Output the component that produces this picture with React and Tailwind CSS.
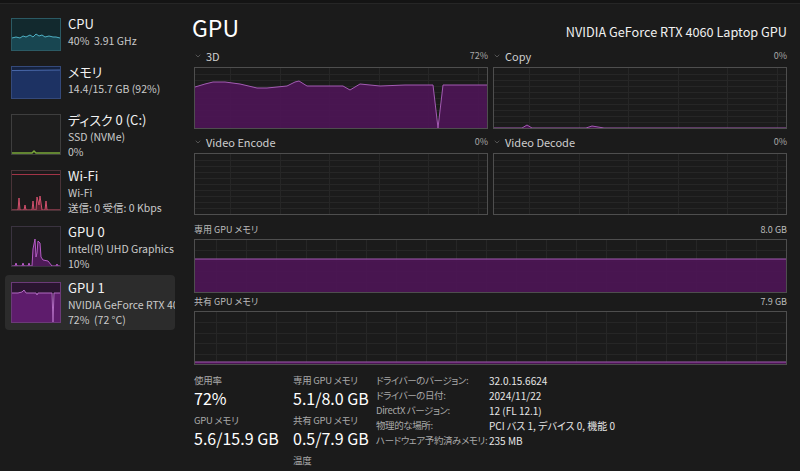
import { ChevronDown } from 'lucide-react';

// Sidebar entries: thumbnail kind + text lines
const DEVICES = [
  { kind: 'cpu', title: 'CPU', lines: ['40%  3.91 GHz'] },
  { kind: 'mem', title: 'メモリ', lines: ['14.4/15.7 GB (92%)'] },
  { kind: 'disk', title: 'ディスク 0 (C:)', lines: ['SSD (NVMe)', '0%'] },
  { kind: 'wifi', title: 'Wi-Fi', lines: ['Wi-Fi', '送信: 0 受信: 0 Kbps'] },
  { kind: 'gpu0', title: 'GPU 0', lines: ['Intel(R) UHD Graphics', '10%'] },
  { kind: 'gpu1', title: 'GPU 1', lines: ['NVIDIA GeForce RTX 4060 Laptop GPU', '72%  (72 °C)'], active: true },
];

function Thumb({ kind, tall }) {
  const w = 48;
  const h = tall ? 39 : 31;
  if (kind === 'cpu') {
    const line = '0,19 4,18 8,19 11,17 14,18 18,16 21,18 24,15 27,17 30,16 33,18 37,17 41,18 44,18 48,19';
    return (
      <svg width={w + 2} height={h + 2} className="block shrink-0 border border-[#2b5a64] bg-[#12292e]">
        <polygon points={`${line} 48,31 0,31`} fill="#184651" />
        <polyline points={line} fill="none" stroke="#4fb0c4" strokeWidth="1" />
      </svg>
    );
  }
  if (kind === 'mem') {
    return (
      <svg width={w + 2} height={h + 2} className="block shrink-0 border border-[#34497a] bg-[#16233f]">
        <rect x="0" y="3" width={w} height={h - 3} fill="#1d3263" />
        <line x1="0" x2={w} y1="3.5" y2="3" stroke="#4a69ab" />
      </svg>
    );
  }
  if (kind === 'disk') {
    return (
      <svg width={w + 2} height={h + 2} className="block shrink-0 border border-[#3e3e3e] bg-[#1d1d1d]">
        <polyline points="0,38 20,38 22,36 24,38 48,38" fill="none" stroke="#7aa83a" strokeWidth="1.5" />
      </svg>
    );
  }
  if (kind === 'wifi') {
    const spikes = '0,39 6,39 7,27 8,39 12,39 13,34 14,39 20,39 21,30 22,39 24,39 25,26 27,34 28,25 30,39 33,39 34,30 35,39 44,39 48,39';
    return (
      <svg width={w + 2} height={h + 2} className="block shrink-0 border border-[#4a3338] bg-[#1c1a1b]">
        <line x1="0" x2={w} y1="3.5" y2="3.5" stroke="#a33447" />
        <polygon points={spikes} fill="#5a2030" />
        <polyline points={spikes} fill="none" stroke="#d0506c" strokeWidth="1" />
      </svg>
    );
  }
  if (kind === 'gpu0') {
    const spikes = '0,39 3,39 4,36 5,39 10,39 11,36 12,39 16,39 17,36 18,39 20,39 21,22 23,12 24,30 25,26 26,14 28,16 29,30 31,33 36,34 40,39 44,39 45,37 46,39 48,39';
    return (
      <svg width={w + 2} height={h + 2} className="block shrink-0 border border-[#3a3340] bg-[#1c1b1d]">
        <polygon points={spikes} fill="#4d1a57" />
        <polyline points={spikes} fill="none" stroke="#b45bc4" strokeWidth="1" />
      </svg>
    );
  }
  const line = '0,10 6,10 10,9 12,7 14,10 20,10 24,10 25,12 26,10 36,10 40,10 41,39 42,10 48,10';
  return (
    <svg width={w + 2} height={h + 2} className="block shrink-0 border border-[#6b3a78] bg-[#2a1530]">
      <polygon points={`${line} 48,39 0,39`} fill="#5e1c6c" />
      <polyline points={line} fill="none" stroke="#b06ac0" strokeWidth="1" />
    </svg>
  );
}

function Grid({ w, h, step, offset, rows }) {
  const lines = [];
  for (let x = offset; x < w; x += step) {
    const px = Math.round(x) + 0.5;
    lines.push(<line key={`v${x}`} x1={px} x2={px} y1={0} y2={h} />);
  }
  for (let i = 1; i < rows; i++) {
    const py = Math.round((h * i) / rows) + 0.5;
    lines.push(<line key={`h${i}`} x1={0} x2={w} y1={py} y2={py} />);
  }
  return (
    <g stroke="#262626" strokeWidth="1">
      {lines}
    </g>
  );
}

function Chart({ w, h, step = 49.5, offset = 35, rows = 10, line }) {
  return (
    <div className="border border-[#4e4e4e] bg-[#1b1b1b]">
      <svg width={w} height={h} className="block">
        <Grid w={w} h={h} step={step} offset={offset} rows={rows} />
        {line && (
          <>
            <polygon points={`${line} ${w},${h} 0,${h}`} fill="#4b1553" fillOpacity="0.95" />
            <polyline points={line} fill="none" stroke="#a35bb3" strokeWidth="1" />
          </>
        )}
      </svg>
    </div>
  );
}

function EngineLabel({ name, value }) {
  return (
    <div className="flex h-[18px] items-start justify-between leading-[14px]">
      <span className="flex items-center gap-[4px] text-[11px] text-[#cfcfcf]">
        <ChevronDown size={8} strokeWidth={1.5} className="text-[#8a8a8a]" />
        {name}
      </span>
      <span className="text-[9px] text-[#a8a8a8]">{value}</span>
    </div>
  );
}

function Stat({ label, value }) {
  return (
    <div className="pb-[3px]">
      <div className="text-[9.5px] leading-[14px] tracking-[-0.3px] text-[#a8a8a8]">{label}</div>
      {value && <div className="text-[16px] leading-[23px]">{value}</div>}
    </div>
  );
}

const LINE_3D =
  '0,19 10,16 18,14 30,14 45,16 62,20 72,20 92,18 100,14 104,13 112,18 130,18 148,18 155,22 165,16 185,18 210,17 238,17 243,60 248,17 292,17';
const LINE_COPY = '0,60 28,60 33,57 38,60 92,60 98,58 110,60 292,60';

const DRIVER = [
  ['ドライバーのバージョン:', '32.0.15.6624'],
  ['ドライバーの日付:', '2024/11/22'],
  ['DirectX バージョン:', '12 (FL 12.1)'],
  ['物理的な場所:', 'PCI バス 1, デバイス 0, 機能 0'],
  ['ハードウェア予約済みメモリ:', '235 MB'],
];

export default function App() {
  return (
    <div className="h-[471px] w-[800px] overflow-hidden bg-[#1b1b1b] font-['Noto_Sans_CJK_JP',sans-serif] text-white [font-feature-settings:'palt']">
      <div className="h-[4px] border-b border-[#262626] bg-[#141414]" />
      <div className="flex">
        {/* device list */}
        <aside className="w-[180px] shrink-0 pt-[7px]">
          {DEVICES.map((d) => {
            const tall = d.lines.length > 1;
            return (
              <div
                key={d.title}
                className={`mx-[5px] mb-[1px] flex items-start gap-[7px] overflow-hidden whitespace-nowrap rounded-[4px] px-[6px] pt-[7px] ${
                  tall ? 'h-[55px]' : 'h-[47px]'
                } ${d.active ? 'bg-[#2c2c2c]' : ''}`}
              >
                <Thumb kind={d.kind} tall={tall} />
                <div className="-mt-[3px] min-w-0">
                  <div className="text-[13px] leading-[18px] text-[#f2f2f2]">{d.title}</div>
                  {d.lines.map((l) => (
                    <div key={l} className="whitespace-pre text-[10.5px] leading-[15px] text-[#cacaca]">
                      {l}
                    </div>
                  ))}
                </div>
              </div>
            );
          })}
        </aside>

        {/* GPU detail */}
        <main className="w-[620px] pl-[14px] pr-[13px] pt-[8px]">
          <div className="flex h-[30px] items-baseline justify-between">
            <h1 className="-ml-[2px] text-[23px] leading-[30px] text-white">GPU</h1>
            <span className="text-[12.7px] text-[#f0f0f0]">NVIDIA GeForce RTX 4060 Laptop GPU</span>
          </div>

          <div className="mt-[7px] grid grid-cols-2 gap-x-[5px]">
            <div>
              <EngineLabel name="3D" value="72%" />
              <Chart w={292} h={60} line={LINE_3D} />
            </div>
            <div>
              <EngineLabel name="Copy" value="0%" />
              <Chart w={292} h={60} line={LINE_COPY} />
            </div>
            <div className="mt-[6px]">
              <EngineLabel name="Video Encode" value="0%" />
              <Chart w={292} h={60} />
            </div>
            <div className="mt-[6px]">
              <EngineLabel name="Video Decode" value="0%" />
              <Chart w={292} h={60} />
            </div>
          </div>

          <div className="mt-[8px] flex h-[16px] items-start justify-between text-[9px] leading-[14px] text-[#bdbdbd]">
            <span>専用 GPU メモリ</span>
            <span>8.0 GB</span>
          </div>
          <Chart w={591} h={52} step={30} offset={21} rows={5} line="0,19 591,19" />

          <div className="mt-[2px] flex h-[16px] items-start justify-between text-[9px] leading-[14px] text-[#bdbdbd]">
            <span>共有 GPU メモリ</span>
            <span>7.9 GB</span>
          </div>
          <Chart w={591} h={52} step={30} offset={21} rows={5} line="0,50 591,50" />

          <div className="mt-[8px] flex whitespace-nowrap">
            <div className="w-[99px] shrink-0">
              <Stat label="使用率" value="72%" />
              <Stat label="GPU メモリ" value="5.6/15.9 GB" />
            </div>
            <div className="w-[83px] shrink-0">
              <Stat label="専用 GPU メモリ" value="5.1/8.0 GB" />
              <Stat label="共有 GPU メモリ" value="0.5/7.9 GB" />
              <Stat label="温度" />
            </div>
            <div>
              {DRIVER.map(([k, v]) => (
                <div key={k} className="flex leading-[15px]">
                  <span className="w-[113px] shrink-0 text-[9.5px] tracking-[-0.4px] text-[#a8a8a8]">{k}</span>
                  <span className="text-[10px] text-[#e6e6e6]">{v}</span>
                </div>
              ))}
            </div>
          </div>
        </main>
      </div>
    </div>
  );
}
